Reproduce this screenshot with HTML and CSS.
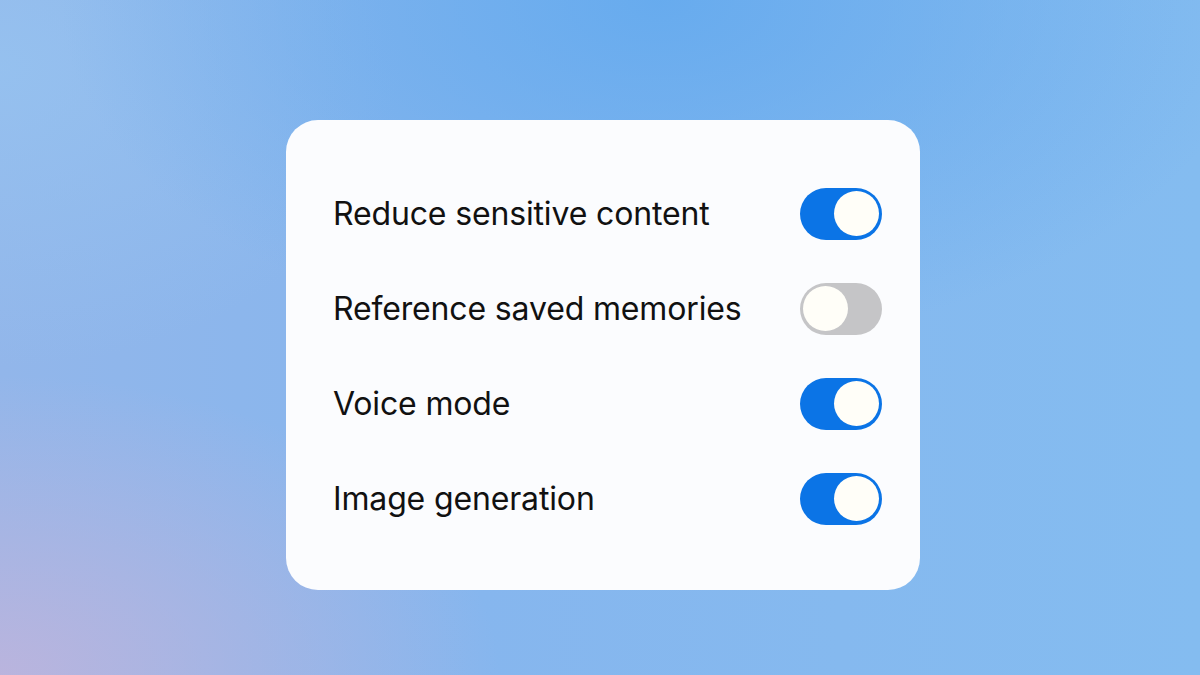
FILE: index.html
```html
<!DOCTYPE html>
<html lang="en">
<head>
<meta charset="utf-8">
<title>Settings</title>
<link rel="stylesheet" href="styles.css">
</head>
<body>
<main class="stage">
  <section class="card">
    <div class="row">
      <span class="label">Reduce sensitive content</span>
      <span class="toggle on"><span class="knob"></span></span>
    </div>
    <div class="row">
      <span class="label">Reference saved memories</span>
      <span class="toggle off"><span class="knob"></span></span>
    </div>
    <div class="row">
      <span class="label">Voice mode</span>
      <span class="toggle on"><span class="knob"></span></span>
    </div>
    <div class="row">
      <span class="label">Image generation</span>
      <span class="toggle on"><span class="knob"></span></span>
    </div>
  </section>
</main>
</body>
</html>
```
FILE: styles.css
```css
html, body {
  margin: 0;
  padding: 0;
  width: 1200px;
  height: 675px;
  overflow: hidden;
}
body {
  font-family: Inter, "Noto Sans", "Liberation Sans", sans-serif;
}
.stage {
  width: 1200px;
  height: 675px;
  box-sizing: border-box;
  padding-top: 120px;
  padding-left: 286px;
  background:
    radial-gradient(ellipse 500px 300px at 0% 100%, rgba(190, 180, 220, 0.9), rgba(190, 180, 220, 0) 100%),
    radial-gradient(ellipse 600px 350px at 55% 0%, rgba(100, 170, 238, 0.9), rgba(100, 170, 238, 0) 100%),
    radial-gradient(ellipse 400px 300px at 0% 10%, rgba(150, 195, 240, 0.8), rgba(150, 195, 240, 0) 100%),
    linear-gradient(90deg, #92b6ea 0%, #86b6ee 40%, #84bcf0 100%);
}
.card {
  width: 634px;
  height: 470px;
  box-sizing: border-box;
  padding: 46px 38px 44px 47px;
  background: #fbfcfe;
  border-radius: 32px;
  display: flex;
  flex-direction: column;
}
.row {
  height: 95px;
  display: flex;
  align-items: center;
  justify-content: space-between;
}
.label {
  font-size: 32px;
  color: #111;
  letter-spacing: -0.15px;
}
.toggle {
  width: 82px;
  height: 52px;
  border-radius: 26px;
  box-sizing: border-box;
  padding: 3px;
  display: flex;
  align-items: center;
}
.toggle.on {
  background: #0b74e6;
  justify-content: flex-end;
}
.toggle.off {
  background: #c5c5c7;
  justify-content: flex-start;
}
.knob {
  width: 45px;
  height: 45px;
  border-radius: 50%;
  background: #fffef8;
}
```
